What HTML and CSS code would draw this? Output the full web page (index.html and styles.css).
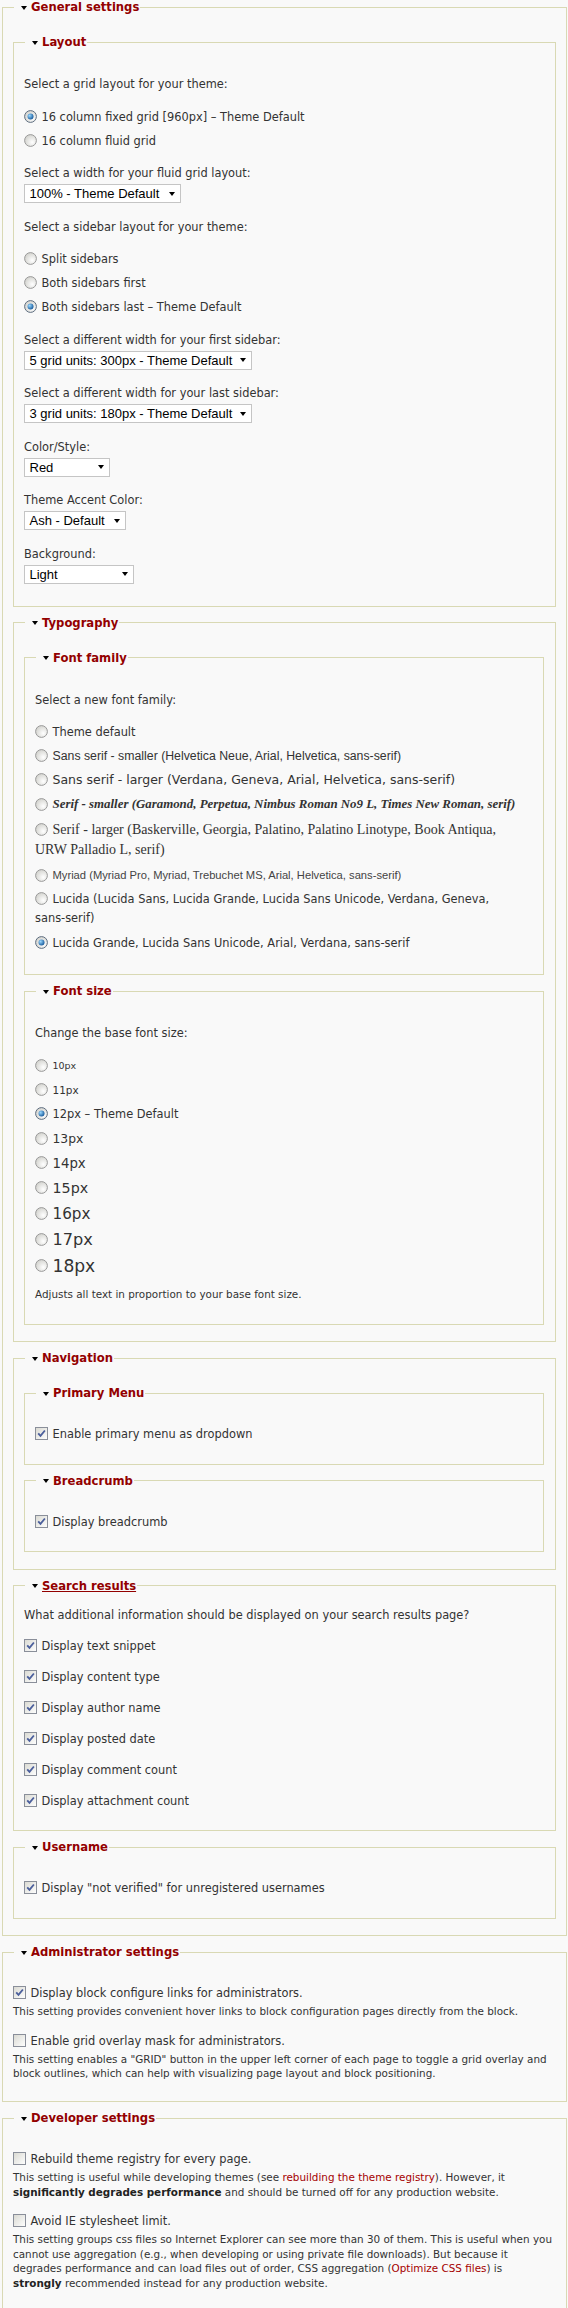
FILE: index.html
```html
<!DOCTYPE html>
<html lang="en">
<head>
<meta charset="utf-8">
<title>Theme settings</title>
<link rel="stylesheet" href="styles.css">
</head>
<body>
<svg class="defs" width="0" height="0" aria-hidden="true">
  <defs>
    <linearGradient id="boxg" x1="0" y1="0" x2="1" y2="1">
      <stop offset="0" stop-color="#d9d9d2"/>
      <stop offset="1" stop-color="#ffffff"/>
    </linearGradient>
    <radialGradient id="radg" cx="0.65" cy="0.65" r="0.75">
      <stop offset="0" stop-color="#ffffff"/>
      <stop offset="1" stop-color="#cfcfca"/>
    </radialGradient>
    <radialGradient id="dotg" cx="0.35" cy="0.35" r="0.75">
      <stop offset="0" stop-color="#9ad8ff"/>
      <stop offset="1" stop-color="#0b4f93"/>
    </radialGradient>
  </defs>
</svg>

<fieldset class="fs">
  <legend><span class="tri"></span>General settings</legend>

  <fieldset class="fs">
    <legend><span class="tri"></span>Layout</legend>
    <div class="item">
      <span class="item-label">Select a grid layout for your theme:</span>
      <div class="radios">
        <label class="radio"><svg class="rb" viewBox="0 0 13 13"><circle cx="6.5" cy="6.5" r="5.9" fill="url(#radg)" stroke="#5e6e80"/><circle cx="6.5" cy="6.5" r="3" fill="url(#dotg)"/></svg>16 column fixed grid [960px] – Theme Default</label>
        <label class="radio"><svg class="rb" viewBox="0 0 13 13"><circle cx="6.5" cy="6.5" r="5.9" fill="url(#radg)" stroke="#9a9a9a"/></svg>16 column fluid grid</label>
      </div>
    </div>
    <div class="item">
      <span class="item-label">Select a width for your fluid grid layout:</span>
      <span class="select w157">100% - Theme Default</span>
    </div>
    <div class="item">
      <span class="item-label">Select a sidebar layout for your theme:</span>
      <div class="radios">
        <label class="radio"><svg class="rb" viewBox="0 0 13 13"><circle cx="6.5" cy="6.5" r="5.9" fill="url(#radg)" stroke="#9a9a9a"/></svg>Split sidebars</label>
        <label class="radio"><svg class="rb" viewBox="0 0 13 13"><circle cx="6.5" cy="6.5" r="5.9" fill="url(#radg)" stroke="#9a9a9a"/></svg>Both sidebars first</label>
        <label class="radio"><svg class="rb" viewBox="0 0 13 13"><circle cx="6.5" cy="6.5" r="5.9" fill="url(#radg)" stroke="#5e6e80"/><circle cx="6.5" cy="6.5" r="3" fill="url(#dotg)"/></svg>Both sidebars last – Theme Default</label>
      </div>
    </div>
    <div class="item">
      <span class="item-label">Select a different width for your first sidebar:</span>
      <span class="select w228">5 grid units: 300px - Theme Default</span>
    </div>
    <div class="item">
      <span class="item-label">Select a different width for your last sidebar:</span>
      <span class="select w228">3 grid units: 180px - Theme Default</span>
    </div>
    <div class="item">
      <span class="item-label">Color/Style:</span>
      <span class="select w86">Red</span>
    </div>
    <div class="item">
      <span class="item-label">Theme Accent Color:</span>
      <span class="select w102">Ash - Default</span>
    </div>
    <div class="item">
      <span class="item-label">Background:</span>
      <span class="select w110">Light</span>
    </div>
  </fieldset>

  <fieldset class="fs">
    <legend><span class="tri"></span>Typography</legend>

    <fieldset class="fs">
      <legend><span class="tri"></span>Font family</legend>
      <div class="item">
        <span class="item-label">Select a new font family:</span>
        <div class="radios">
          <label class="radio"><svg class="rb" viewBox="0 0 13 13"><circle cx="6.5" cy="6.5" r="5.9" fill="url(#radg)" stroke="#9a9a9a"/></svg>Theme default</label>
          <label class="radio ff-arial"><svg class="rb" viewBox="0 0 13 13"><circle cx="6.5" cy="6.5" r="5.9" fill="url(#radg)" stroke="#9a9a9a"/></svg>Sans serif - smaller (Helvetica Neue, Arial, Helvetica, sans-serif)</label>
          <label class="radio ff-verdana"><svg class="rb" viewBox="0 0 13 13"><circle cx="6.5" cy="6.5" r="5.9" fill="url(#radg)" stroke="#9a9a9a"/></svg>Sans serif - larger (Verdana, Geneva, Arial, Helvetica, sans-serif)</label>
          <label class="radio ff-garamond"><svg class="rb" viewBox="0 0 13 13"><circle cx="6.5" cy="6.5" r="5.9" fill="url(#radg)" stroke="#9a9a9a"/></svg>Serif - smaller (Garamond, Perpetua, Nimbus Roman No9 L, Times New Roman, serif)</label>
          <label class="radio ff-georgia"><svg class="rb" viewBox="0 0 13 13"><circle cx="6.5" cy="6.5" r="5.9" fill="url(#radg)" stroke="#9a9a9a"/></svg>Serif - larger (Baskerville, Georgia, Palatino, Palatino Linotype, Book Antiqua,<br>URW Palladio L, serif)</label>
          <label class="radio ff-myriad"><svg class="rb" viewBox="0 0 13 13"><circle cx="6.5" cy="6.5" r="5.9" fill="url(#radg)" stroke="#9a9a9a"/></svg>Myriad (Myriad Pro, Myriad, Trebuchet MS, Arial, Helvetica, sans-serif)</label>
          <label class="radio ff-lucida"><svg class="rb" viewBox="0 0 13 13"><circle cx="6.5" cy="6.5" r="5.9" fill="url(#radg)" stroke="#9a9a9a"/></svg>Lucida (Lucida Sans, Lucida Grande, Lucida Sans Unicode, Verdana, Geneva, <span class="nowrap">sans-serif)</span></label>
          <label class="radio"><svg class="rb" viewBox="0 0 13 13"><circle cx="6.5" cy="6.5" r="5.9" fill="url(#radg)" stroke="#5e6e80"/><circle cx="6.5" cy="6.5" r="3" fill="url(#dotg)"/></svg>Lucida Grande, Lucida Sans Unicode, Arial, Verdana, sans-serif</label>
        </div>
      </div>
    </fieldset>

    <fieldset class="fs">
      <legend><span class="tri"></span>Font size</legend>
      <div class="item">
        <span class="item-label">Change the base font size:</span>
        <div class="radios">
          <label class="radio s10"><svg class="rb" viewBox="0 0 13 13"><circle cx="6.5" cy="6.5" r="5.9" fill="url(#radg)" stroke="#9a9a9a"/></svg>10px</label>
          <label class="radio s11"><svg class="rb" viewBox="0 0 13 13"><circle cx="6.5" cy="6.5" r="5.9" fill="url(#radg)" stroke="#9a9a9a"/></svg>11px</label>
          <label class="radio s12"><svg class="rb" viewBox="0 0 13 13"><circle cx="6.5" cy="6.5" r="5.9" fill="url(#radg)" stroke="#5e6e80"/><circle cx="6.5" cy="6.5" r="3" fill="url(#dotg)"/></svg>12px – Theme Default</label>
          <label class="radio s13"><svg class="rb" viewBox="0 0 13 13"><circle cx="6.5" cy="6.5" r="5.9" fill="url(#radg)" stroke="#9a9a9a"/></svg>13px</label>
          <label class="radio s14"><svg class="rb" viewBox="0 0 13 13"><circle cx="6.5" cy="6.5" r="5.9" fill="url(#radg)" stroke="#9a9a9a"/></svg>14px</label>
          <label class="radio s15"><svg class="rb" viewBox="0 0 13 13"><circle cx="6.5" cy="6.5" r="5.9" fill="url(#radg)" stroke="#9a9a9a"/></svg>15px</label>
          <label class="radio s16"><svg class="rb" viewBox="0 0 13 13"><circle cx="6.5" cy="6.5" r="5.9" fill="url(#radg)" stroke="#9a9a9a"/></svg>16px</label>
          <label class="radio s17"><svg class="rb" viewBox="0 0 13 13"><circle cx="6.5" cy="6.5" r="5.9" fill="url(#radg)" stroke="#9a9a9a"/></svg>17px</label>
          <label class="radio s18"><svg class="rb" viewBox="0 0 13 13"><circle cx="6.5" cy="6.5" r="5.9" fill="url(#radg)" stroke="#9a9a9a"/></svg>18px</label>
        </div>
        <div class="desc desc-gap">Adjusts all text in proportion to your base font size.</div>
      </div>
    </fieldset>
  </fieldset>

  <fieldset class="fs">
    <legend><span class="tri"></span>Navigation</legend>
    <fieldset class="fs">
      <legend><span class="tri"></span>Primary Menu</legend>
      <div class="item check">
        <label class="cbl"><svg class="cb" viewBox="0 0 13 13"><rect x="0.5" y="0.5" width="12" height="12" fill="url(#boxg)" stroke="#8a8f9a"/><path d="M3.2 6.3 5.5 8.9 9.9 3.5" fill="none" stroke="#4b5f9c" stroke-width="1.8"/></svg>Enable primary menu as dropdown</label>
      </div>
    </fieldset>
    <fieldset class="fs">
      <legend><span class="tri"></span>Breadcrumb</legend>
      <div class="item check">
        <label class="cbl"><svg class="cb" viewBox="0 0 13 13"><rect x="0.5" y="0.5" width="12" height="12" fill="url(#boxg)" stroke="#8a8f9a"/><path d="M3.2 6.3 5.5 8.9 9.9 3.5" fill="none" stroke="#4b5f9c" stroke-width="1.8"/></svg>Display breadcrumb</label>
      </div>
    </fieldset>
  </fieldset>

  <fieldset class="fs">
    <legend><span class="tri"></span><span class="legend-link">Search results</span></legend>
    <div class="intro">What additional information should be displayed on your search results page?</div>
    <div class="item check">
      <label class="cbl"><svg class="cb" viewBox="0 0 13 13"><rect x="0.5" y="0.5" width="12" height="12" fill="url(#boxg)" stroke="#8a8f9a"/><path d="M3.2 6.3 5.5 8.9 9.9 3.5" fill="none" stroke="#4b5f9c" stroke-width="1.8"/></svg>Display text snippet</label>
    </div>
    <div class="item check">
      <label class="cbl"><svg class="cb" viewBox="0 0 13 13"><rect x="0.5" y="0.5" width="12" height="12" fill="url(#boxg)" stroke="#8a8f9a"/><path d="M3.2 6.3 5.5 8.9 9.9 3.5" fill="none" stroke="#4b5f9c" stroke-width="1.8"/></svg>Display content type</label>
    </div>
    <div class="item check">
      <label class="cbl"><svg class="cb" viewBox="0 0 13 13"><rect x="0.5" y="0.5" width="12" height="12" fill="url(#boxg)" stroke="#8a8f9a"/><path d="M3.2 6.3 5.5 8.9 9.9 3.5" fill="none" stroke="#4b5f9c" stroke-width="1.8"/></svg>Display author name</label>
    </div>
    <div class="item check">
      <label class="cbl"><svg class="cb" viewBox="0 0 13 13"><rect x="0.5" y="0.5" width="12" height="12" fill="url(#boxg)" stroke="#8a8f9a"/><path d="M3.2 6.3 5.5 8.9 9.9 3.5" fill="none" stroke="#4b5f9c" stroke-width="1.8"/></svg>Display posted date</label>
    </div>
    <div class="item check">
      <label class="cbl"><svg class="cb" viewBox="0 0 13 13"><rect x="0.5" y="0.5" width="12" height="12" fill="url(#boxg)" stroke="#8a8f9a"/><path d="M3.2 6.3 5.5 8.9 9.9 3.5" fill="none" stroke="#4b5f9c" stroke-width="1.8"/></svg>Display comment count</label>
    </div>
    <div class="item check">
      <label class="cbl"><svg class="cb" viewBox="0 0 13 13"><rect x="0.5" y="0.5" width="12" height="12" fill="url(#boxg)" stroke="#8a8f9a"/><path d="M3.2 6.3 5.5 8.9 9.9 3.5" fill="none" stroke="#4b5f9c" stroke-width="1.8"/></svg>Display attachment count</label>
    </div>
  </fieldset>

  <fieldset class="fs">
    <legend><span class="tri"></span>Username</legend>
    <div class="item check">
      <label class="cbl"><svg class="cb" viewBox="0 0 13 13"><rect x="0.5" y="0.5" width="12" height="12" fill="url(#boxg)" stroke="#8a8f9a"/><path d="M3.2 6.3 5.5 8.9 9.9 3.5" fill="none" stroke="#4b5f9c" stroke-width="1.8"/></svg>Display "not verified" for unregistered usernames</label>
    </div>
  </fieldset>
</fieldset>

<fieldset class="fs">
  <legend><span class="tri"></span>Administrator settings</legend>
  <div class="item check">
    <label class="cbl"><svg class="cb" viewBox="0 0 13 13"><rect x="0.5" y="0.5" width="12" height="12" fill="url(#boxg)" stroke="#8a8f9a"/><path d="M3.2 6.3 5.5 8.9 9.9 3.5" fill="none" stroke="#4b5f9c" stroke-width="1.8"/></svg>Display block configure links for administrators.</label>
    <div class="desc">This setting provides convenient hover links to block configuration pages directly from the block.</div>
  </div>
  <div class="item check">
    <label class="cbl"><svg class="cb" viewBox="0 0 13 13"><rect x="0.5" y="0.5" width="12" height="12" fill="url(#boxg)" stroke="#8a8f9a"/></svg>Enable grid overlay mask for administrators.</label>
    <div class="desc">This setting enables a "GRID" button in the upper left corner of each page to toggle a grid overlay and block outlines, which can help with visualizing page layout and block positioning.</div>
  </div>
</fieldset>

<fieldset class="fs">
  <legend><span class="tri"></span>Developer settings</legend>
  <div class="item check">
    <label class="cbl"><svg class="cb" viewBox="0 0 13 13"><rect x="0.5" y="0.5" width="12" height="12" fill="url(#boxg)" stroke="#8a8f9a"/></svg>Rebuild theme registry for every page.</label>
    <div class="desc">This setting is useful while developing themes (see <a href="#">rebuilding the theme registry</a>). However, it <strong>significantly degrades performance</strong> and should be turned off for any production website.</div>
  </div>
  <div class="item check">
    <label class="cbl"><svg class="cb" viewBox="0 0 13 13"><rect x="0.5" y="0.5" width="12" height="12" fill="url(#boxg)" stroke="#8a8f9a"/></svg>Avoid IE stylesheet limit.</label>
    <div class="desc">This setting groups css files so Internet Explorer can see more than 30 of them. This is useful when you cannot use aggregation (e.g., when developing or using private file downloads). But because it degrades performance and can load files out of order, CSS aggregation (<a href="#">Optimize CSS files</a>) is<br><strong>strongly</strong> recommended instead for any production website.</div>
  </div>
</fieldset>
</body>
</html>
```

FILE: styles.css
```css
* {
  box-sizing: border-box;
}

html,
body {
  margin: 0;
}

body {
  background: #f9f9f9;
  color: #333333;
  font-family: "DejaVu Sans", Verdana, sans-serif;
  font-size: 11.4px;
  line-height: 18px;
  padding: 0 1px 0 2px;
}

.defs {
  position: absolute;
  width: 0;
  height: 0;
  overflow: hidden;
}

/* fieldsets */
.fs {
  border: 1px solid #d9d9b4;
  margin: 9px 0;
  padding: 12px 10.5px 7.5px 10px;
  min-width: 0;
}

body > .fs:first-of-type {
  margin-top: 0;
}

.fs > legend {
  margin-left: 1px;
  padding: 0 1px 0 7px;
  font-weight: bold;
  font-size: 11.6px;
  line-height: 14px;
  color: #930000;
}

.tri {
  display: inline-block;
  width: 0;
  height: 0;
  border-left: 3px solid transparent;
  border-right: 3px solid transparent;
  border-top: 4px solid #000000;
  margin-right: 4px;
  vertical-align: middle;
}

.legend-link {
  text-decoration: underline;
}

/* form items */
.item {
  margin: 14px 0 14.5px;
}

.item-label {
  display: block;
}

.radios {
  margin-top: 14.5px;
}

.radio {
  display: block;
  margin-top: 6px;
}

.radio:first-child {
  margin-top: 0;
}

.rb,
.cb {
  width: 13px;
  height: 13px;
  margin: -2px 4.5px 0 0;
  vertical-align: middle;
}

.cbl {
  display: block;
}

.item.check {
  margin: 13px 0;
}

.nowrap {
  white-space: nowrap;
}

/* select boxes */
.select {
  display: flex;
  align-items: center;
  justify-content: space-between;
  height: 19px;
  margin-top: 2px;
  padding: 0 5px 0 4.5px;
  border: 1px solid #c5c5c5;
  background: #ffffff;
  color: #000000;
  font-family: "Liberation Sans", Arial, sans-serif;
  font-size: 13px;
  line-height: 17px;
  white-space: nowrap;
}

.select::after {
  content: "";
  width: 0;
  height: 0;
  border-left: 3.5px solid transparent;
  border-right: 3.5px solid transparent;
  border-top: 4px solid #000000;
}

.w157 { width: 157px; }
.w228 { width: 228px; }
.w86 { width: 86px; }
.w102 { width: 102px; }
.w110 { width: 110px; }

/* font family samples */
.ff-arial {
  font-family: "Liberation Sans", Arial, sans-serif;
  font-size: 12.3px;
}

.ff-verdana {
  font-family: "DejaVu Sans", Verdana, sans-serif;
  font-size: 12.5px;
}

.ff-garamond {
  font-family: "Liberation Serif", "Times New Roman", serif;
  font-size: 12.9px;
  font-style: italic;
  font-weight: bold;
  line-height: 19px;
  white-space: nowrap;
}

.ff-georgia {
  font-family: "Liberation Serif", "Times New Roman", serif;
  font-size: 14px;
  line-height: 20px;
}

.ff-myriad {
  font-family: "Liberation Sans", Arial, sans-serif;
  font-size: 11.2px;
  color: #444444;
}

.ff-lucida {
  line-height: 19px;
}

/* font size samples */
.s10 { font-size: 9.5px; line-height: 18px; }
.s11 { font-size: 10.45px; line-height: 18px; }
.s12 { font-size: 11.4px; line-height: 19px; }
.s13 { font-size: 12.35px; line-height: 18px; }
.s14 { font-size: 13.3px; line-height: 19px; }
.s15 { font-size: 14.25px; line-height: 19px; }
.s16 { font-size: 15.2px; line-height: 20px; }
.s17 { font-size: 16.15px; line-height: 20px; }
.s18 { font-size: 17.1px; line-height: 21px; }

/* descriptions */
.desc {
  margin-top: 2px;
  font-size: 10.4px;
  line-height: 14.5px;
}

.desc-gap {
  margin-top: 10.5px;
}

.desc a {
  color: #a50000;
  text-decoration: none;
}

.desc strong {
  font-weight: bold;
  color: #222222;
}

.intro {
  margin: 1px 0 13px;
}
```
